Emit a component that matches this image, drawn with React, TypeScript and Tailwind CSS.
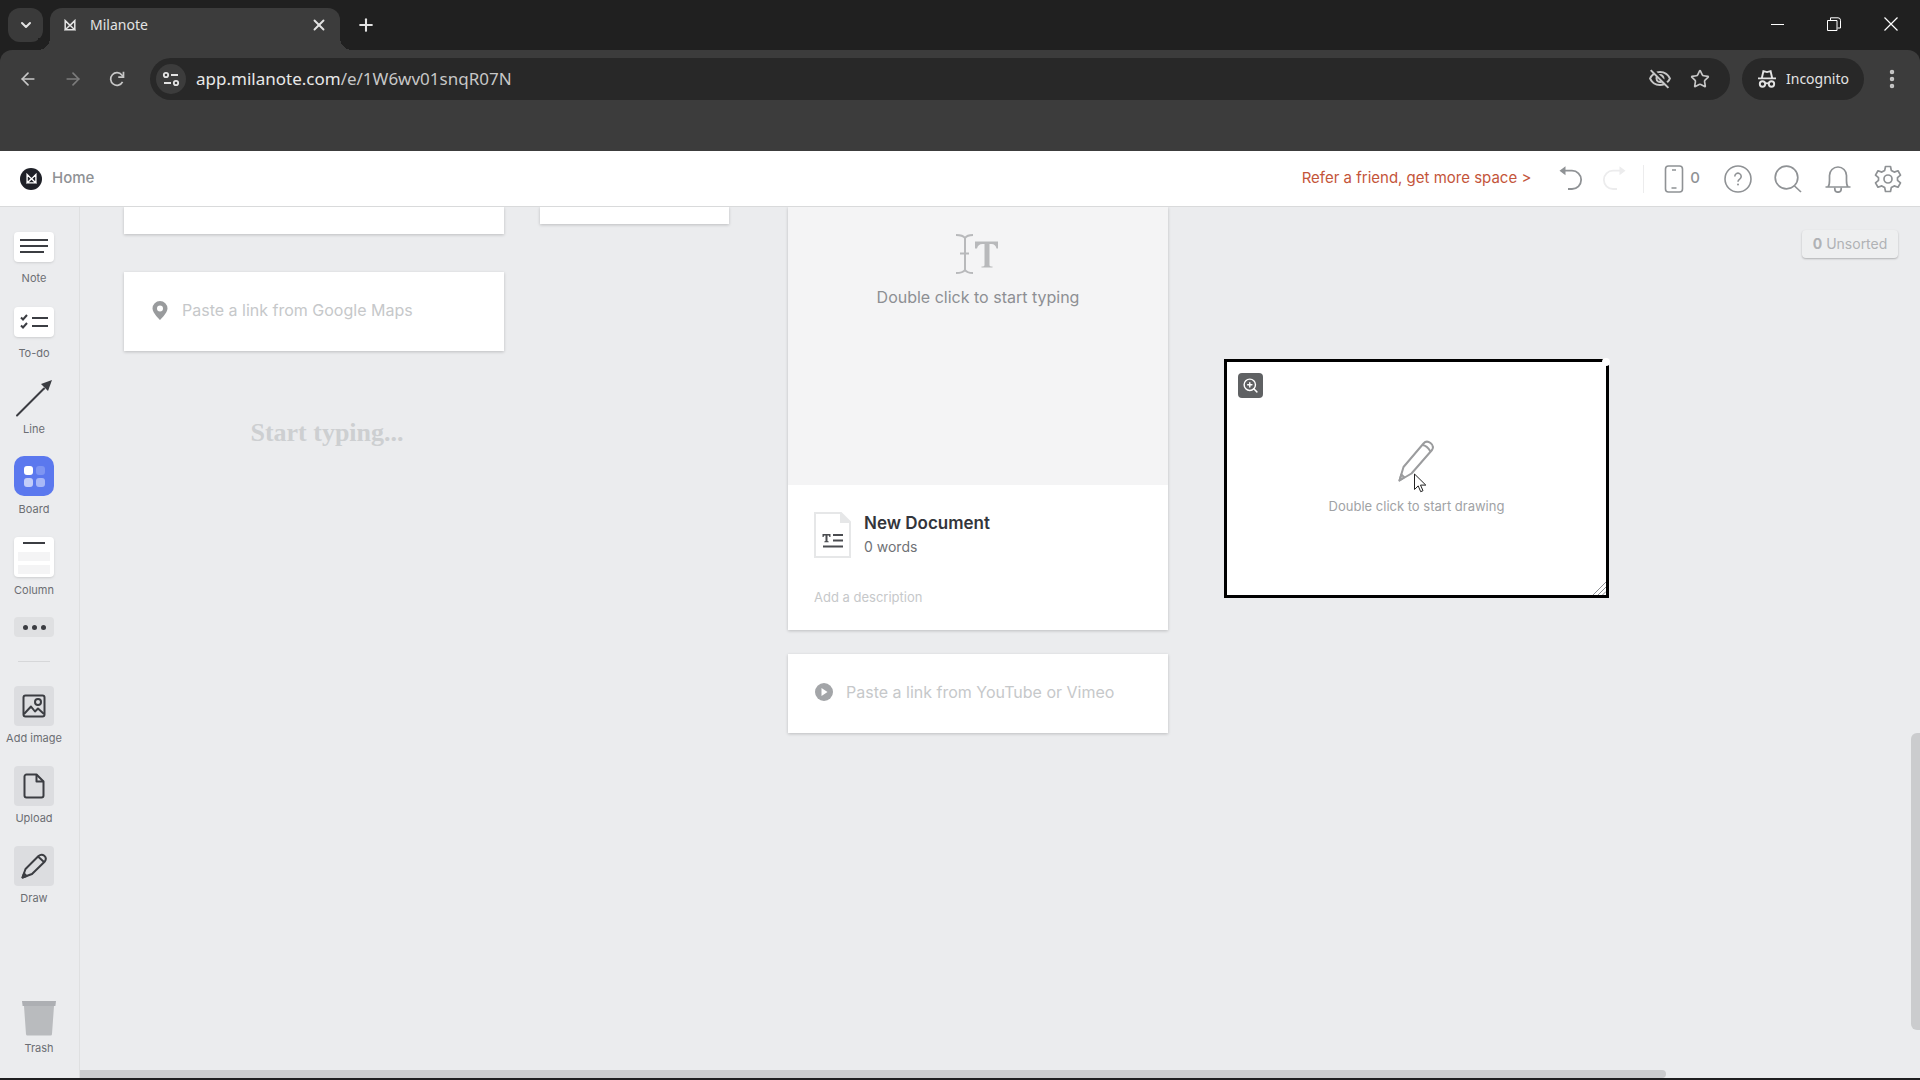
import React from 'react';
import {
  ArrowLeft,
  ArrowRight,
  ChevronDown,
  EllipsisVertical,
  Plus,
  Star,
  X,
  ZoomIn,
} from 'lucide-react';
import { MdOutlineVisibilityOff } from 'react-icons/md';

type IconProps = { className?: string };

function LogoMark({ className }: IconProps) {
  return (
    <svg viewBox="0 0 12 12" className={className} fill="none" stroke="currentColor" strokeWidth="1.5" strokeLinejoin="miter">
      <path d="M1.2 10.6V1.6L6 6.4l4.8-4.8v9M1.2 10.8L6 6.2l4.8 4.6z" />
    </svg>
  );
}

function TuneIcon({ className }: IconProps) {
  return (
    <svg viewBox="0 0 18 18" className={className} fill="none" stroke="currentColor" strokeWidth="1.8">
      <circle cx="4" cy="5" r="2.2" />
      <path d="M9 5h7M2 13h7" />
      <circle cx="14" cy="13" r="2.2" />
    </svg>
  );
}

function ReloadIcon({ className }: IconProps) {
  return (
    <svg viewBox="0 0 20 20" className={className} fill="none" stroke="currentColor" strokeWidth="1.9">
      <path d="M16.2 13.2A7 7 0 1 1 15.4 5.6L17 7.4" />
      <path d="M17.2 2v5.8h-5.8" />
    </svg>
  );
}

function IncognitoIcon({ className }: IconProps) {
  return (
    <svg viewBox="0 0 20 20" className={className} fill="none" stroke="currentColor" strokeWidth="1.9">
      <path d="M1 9.4h18M4.8 9.2L6.4 2.2l3.6.9 3.600-.9 1.600 7" />
      <circle cx="5.500" cy="15" r="2.700" />
      <circle cx="14.500" cy="15" r="2.700" />
      <path d="M8.200 14.600q1.800-1 3.600 0" />
    </svg>
  );
}

function UndoIcon({ className }: IconProps) {
  return (
    <svg viewBox="0 0 24 26" className={className} fill="none" stroke="currentColor" strokeWidth="1.8">
      <path d="M5 4.700h8a9 9 0 0 1 0 18.300H9" />
      <path d="M.5 4.700l6-4.500v9z" fill="currentColor" stroke="none" />
    </svg>
  );
}

function PhoneIcon({ className }: IconProps) {
  return (
    <svg viewBox="0 0 20 28" className={className} fill="none" stroke="currentColor" strokeWidth="1.6">
      <rect x="1.5" y="1" width="17" height="26" rx="3" />
      <path d="M8 5h4M7.5 23h5" />
    </svg>
  );
}

function HelpIcon({ className }: IconProps) {
  return (
    <svg viewBox="0 0 28 28" className={className} fill="none" stroke="currentColor" strokeWidth="1.6">
      <circle cx="14" cy="14" r="13" />
      <path d="M10.8 11.4a3.2 3.2 0 1 1 4.9 2.7c-1.200.8-1.700 1.300-1.700 2.700" />
      <circle cx="14" cy="19.400" r="1" fill="currentColor" stroke="none" />
    </svg>
  );
}

function SearchIcon({ className }: IconProps) {
  return (
    <svg viewBox="0 0 28 28" className={className} fill="none" stroke="currentColor" strokeWidth="1.7">
      <circle cx="12.500" cy="12.500" r="11.300" />
      <path d="M20 20.500l7 6.500" />
    </svg>
  );
}

function BellIcon({ className }: IconProps) {
  return (
    <svg viewBox="0 0 28 28" className={className} fill="none" stroke="currentColor" strokeWidth="1.700">
      <path d="M1.500 22h25M4 22c1.300-1.500 1.500-3.500 1.500-6.500V10.500a8.500 8.500 0 0 1 17 0v5c0 3 .2 5 1.500 6.500" strokeLinejoin="round" />
      <path d="M10.800 22.500v1.500a3.200 3.200 0 0 0 6.400 0v-1.500" />
    </svg>
  );
}

function GearIcon({ className }: IconProps) {
  return (
    <svg viewBox="0 0 28 28" className={className} fill="none" stroke="currentColor" strokeWidth="1.700" strokeLinejoin="round">
      <path d="M11.500 1.500h5l.8 3.900 2.900 1.700 3.800-1.300 2.500 4.300-3 2.600v2.600l3 2.600-2.500 4.300-3.800-1.300-2.900 1.700-.8 3.900h-5l-.8-3.900-2.900-1.700L4 22.200l-2.500-4.300 3-2.600v-2.600l-3-2.600L4 5.800l3.800 1.300 2.900-1.700z" />
      <circle cx="14" cy="14" r="4" />
    </svg>
  );
}

function PencilIcon({ className }: IconProps) {
  return (
    <svg viewBox="0 0 36 42" className={className} fill="none" stroke="currentColor" strokeWidth="2" strokeLinejoin="round">
      <path d="M1.500 40.500L5.500 27 25.500 3.500Q28.500 0 32.500 3t1.500 7L13.500 33.500z" />
      <path d="M24.500 5q4.500.500 8 6.500M1.500 40.500l1.800-6 3 2.700z" />
    </svg>
  );
}

function DrawToolIcon({ className }: IconProps) {
  return (
    <svg viewBox="0 0 26 26" className={className} fill="none" stroke="currentColor" strokeWidth="2" strokeLinejoin="round">
      <path d="M1.500 24.500L4.500 16 17.500 3Q20.500 0.500 23.300 2.800t.5 5.700L11 21z" />
      <path d="M17 3.500l6 5.500M1.500 24.500l1.500-4 2.500 2.500z" />
    </svg>
  );
}

function Tool({ label, children, gap }: { label: string; children: React.ReactNode; gap: string }) {
  return (
    <button className={`flex w-full flex-col items-center ${gap}`}>
      {children}
      <span className="text-[11px] leading-4 text-[#6b6e73]">{label}</span>
    </button>
  );
}

function Browser() {
  return (
    <div className="shrink-0 bg-[#202020] font-['Noto_Sans',sans-serif] text-[#e3e3e3]">
      <div className="flex h-[50px] items-start">
        <button aria-label="Search tabs" className="mt-2 ml-2 flex h-[34px] w-[35px] items-center justify-center rounded-xl bg-[#3a3a3a]">
          <ChevronDown className="size-4" strokeWidth={3} />
        </button>
        <div className="relative mt-2 ml-[7px] flex h-[42px] w-[290px] items-center rounded-t-xl bg-[#3c3c3c] pb-2 pl-[14px]">
          <span className="absolute bottom-0 -left-3 size-3 bg-[radial-gradient(circle_at_0_0,#202020_12px,#3c3c3c_12px)]" />
          <span className="absolute -right-3 bottom-0 size-3 bg-[radial-gradient(circle_at_100%_0,#202020_12px,#3c3c3c_12px)]" />
          <LogoMark className="size-3" />
          <span className="ml-[14px] text-sm">Milanote</span>
          <button aria-label="Close tab" className="mr-3 ml-auto">
            <X className="size-[18px]" strokeWidth={2.5} />
          </button>
        </div>
        <button aria-label="New tab" className="mt-[15px] ml-4">
          <Plus className="size-5" strokeWidth={2.500} />
        </button>
        <div className="mt-4 mr-5 ml-auto flex items-center gap-[39px] text-white">
          <button aria-label="Minimize" className="flex h-4 w-[18px] items-center justify-center">
            <span className="h-px w-[13px] bg-white" />
          </button>
          <button aria-label="Restore">
            <svg viewBox="0 0 14 14" className="w-[18px] px-[2px]" fill="none" stroke="currentColor">
              <path d="M.5 3.500h9.500v10H.5zM3.500 3V.800h7.500q2.500 0 2.500 2.500V11h-3" />
            </svg>
          </button>
          <button aria-label="Close window">
            <svg viewBox="0 0 14 14" className="w-[18px] px-[2px]" fill="none" stroke="currentColor" strokeWidth="1.200">
              <path d="M.5.5l13 13M13.500.5l-13 13" />
            </svg>
          </button>
        </div>
      </div>
      <div className="flex h-[101px] items-start rounded-t-xl bg-[#3c3c3c] pt-2 text-[#c7c7c7]">
        <div className="flex h-[42px] items-center gap-[25px] pr-[24px] pl-[18px]">
          <button aria-label="Back"><ArrowLeft className="size-5" /></button>
          <button aria-label="Forward" className="text-[#7c7c7c]"><ArrowRight className="size-5" /></button>
          <button aria-label="Reload"><ReloadIcon className="size-[18px]" /></button>
        </div>
        <div className="flex h-[42px] flex-1 items-center rounded-full bg-[#282828] pr-5 pl-[6px]">
          <button aria-label="Site information" className="flex size-[30px] items-center justify-center rounded-full bg-[#3c3c3c] text-[#e3e3e3]">
            <TuneIcon className="size-[18px]" />
          </button>
          <div className="relative ml-[10px] h-6 flex-1 text-[17px] leading-6">
            <span className="pointer-events-none absolute inset-0"><span className="text-[#e8e8e8]">app.milanote.com</span>/e/1W6wv01snqR07N</span>
            <input aria-label="Address" className="absolute inset-0 w-full bg-transparent outline-none" />
          </div>
          <button aria-label="Third-party cookies blocked"><MdOutlineVisibilityOff className="size-6" /></button>
          <button aria-label="Bookmark this tab" className="ml-[18px]"><Star className="size-5" /></button>
        </div>
        <button className="ml-3 flex h-[42px] w-[122px] items-center gap-[9px] rounded-full bg-[#282828] pl-[15px] text-sm text-[#e3e3e3]">
          <IncognitoIcon className="size-5" />
          Incognito
        </button>
        <button aria-label="Menu" className="mt-[9px] mr-4 ml-4">
          <EllipsisVertical className="size-6" strokeWidth={2.500} />
        </button>
      </div>
    </div>
  );
}

function Header() {
  return (
    <header className="flex h-14 shrink-0 items-center border-b border-[#d9dadb] bg-white text-[#8f9295]">
      <a href="#home" className="ml-5 flex items-center gap-[10px] text-[15px] font-medium">
        <span className="flex size-[22px] items-center justify-center rounded-full bg-[#1f2128] text-white">
          <LogoMark className="size-[11px]" />
        </span>
        Home
      </a>
      <a href="#refer" className="ml-auto text-[15px] text-[#c4553a]">Refer a friend, get more space &gt;</a>
      <button aria-label="Undo" className="ml-7"><UndoIcon className="w-6" /></button>
      <button aria-label="Redo" className="ml-[19px] -scale-x-100 text-[#ececed]"><UndoIcon className="w-6" /></button>
      <span className="ml-[17px] h-7 w-px bg-[#ececed]" />
      <button className="ml-5 flex items-center gap-[6px] text-[15px] font-medium"><PhoneIcon className="w-5" />0</button>
      <button aria-label="Help" className="ml-6"><HelpIcon className="size-7" /></button>
      <button aria-label="Search" className="ml-[22px]"><SearchIcon className="size-7" /></button>
      <button aria-label="Notifications" className="ml-[22px]"><BellIcon className="size-7" /></button>
      <button aria-label="Settings" className="mr-[18px] ml-[22px]"><GearIcon className="size-7" /></button>
    </header>
  );
}

function Sidebar() {
  return (
    <nav className="flex w-20 shrink-0 flex-col border-r border-[#dfe0e1] pt-[25px] pr-[11px] pb-[22px] text-[#3b3d42]">
      <div className="flex flex-col items-center">
        <Tool label="Note" gap="gap-2">
          <span className="flex h-[30px] w-10 flex-col gap-1 rounded-sm bg-white px-[6px] pt-[7px] shadow-sm">
            <span className="h-[2px] bg-current" />
            <span className="h-[2px] bg-current" />
            <span className="mr-1 h-[2px] bg-current" />
          </span>
        </Tool>
        <div className="h-[21px]" />
        <Tool label="To-do" gap="gap-2">
          <span className="flex h-[30px] w-10 items-center justify-center rounded-sm bg-white shadow-sm">
            <svg viewBox="0 0 28 16" className="w-7" fill="none" stroke="currentColor" strokeWidth="2">
              <path d="M1 3.500l2 2L7 1M1 11.500l2 2L7 9M12 4h16M12 12h16" />
            </svg>
          </span>
        </Tool>
        <div className="h-[18px]" />
        <Tool label="Line" gap="gap-1">
          <svg viewBox="0 0 38 38" className="size-[38px]" fill="none" stroke="currentColor" strokeWidth="2">
            <path d="M2 36.500L29 9.500" strokeLinecap="round" />
            <path d="M37 1l-4 11-7-7z" fill="currentColor" stroke="none" />
          </svg>
        </Tool>
        <div className="h-[19px]" />
        <Tool label="Board" gap="gap-[5px]">
          <span className="grid size-10 grid-cols-2 content-center justify-center gap-[3px] rounded-[10px] bg-[#5b78ee] pr-[9px] pl-[10px]">
            <span className="size-[9px] rounded-[3px] bg-white" />
            <span className="size-[9px] rounded-[3px] bg-[#7e95f2]" />
            <span className="size-[9px] rounded-[3px] bg-[#c3cdf9]" />
            <span className="size-[9px] rounded-[3px] bg-[#a9b8f7]" />
          </span>
        </Tool>
        <div className="h-5" />
        <Tool label="Column" gap="gap-[5px]">
          <span className="flex size-10 flex-col items-center gap-1 rounded-sm bg-white px-1 pt-[5px] shadow-sm">
            <span className="mb-1 h-[2px] w-[22px] bg-current" />
            <span className="h-[9px] w-full bg-[#f4f4f5]" />
            <span className="h-[9px] w-full bg-[#f4f4f5]" />
          </span>
        </Tool>
        <button aria-label="More tools" className="mt-[19px] flex h-5 w-10 items-center justify-center gap-1 rounded-sm bg-[#dfe0e2]">
          <span className="size-[5px] rounded-full bg-current" />
          <span className="size-[5px] rounded-full bg-current" />
          <span className="size-[5px] rounded-full bg-current" />
        </button>
        <div className="mt-6 mb-6 h-px w-8 bg-[#d6d7d9]" />
        <Tool label="Add image" gap="gap-1">
          <span className="flex size-10 items-center justify-center rounded-sm bg-[#dcdde0]">
            <svg viewBox="0 0 24 24" className="size-6" fill="none" stroke="currentColor" strokeWidth="2" strokeLinejoin="round">
              <rect x="1.500" y="1.500" width="21" height="21" rx="2" />
              <circle cx="16" cy="8" r="3" />
              <path d="M2 20l7-7.500 4 5 3-3 6 5.500" />
            </svg>
          </span>
        </Tool>
        <div className="h-5" />
        <Tool label="Upload" gap="gap-1">
          <span className="flex size-10 items-center justify-center rounded-sm bg-[#dcdde0]">
            <svg viewBox="0 0 22 26" className="h-[26px]" fill="none" stroke="currentColor" strokeWidth="2" strokeLinejoin="round">
              <path d="M13.500 1.500H3.500a2 2 0 0 0-2 2v19a2 2 0 0 0 2 2h15a2 2 0 0 0 2-2V8.500z" />
              <path d="M13.500 1.500v7h7" />
            </svg>
          </span>
        </Tool>
        <div className="h-5" />
        <Tool label="Draw" gap="gap-1">
          <span className="flex size-10 items-center justify-center rounded-sm bg-[#dcdde0]">
            <DrawToolIcon className="size-[26px]" />
          </span>
        </Tool>
      </div>
      <div className="mt-auto pl-[10px]">
        <Tool label="Trash" gap="gap-1">
          <svg viewBox="0 0 34 36" className="w-[34px]">
            <path d="M2 6h30l-2 28q0 1.500-1.500 1.500h-23Q4 35.500 4 34z" fill="#b9bbbe" />
            <path d="M0 1h34l-.6 5H.6z" fill="#adafb3" />
          </svg>
        </Tool>
      </div>
    </nav>
  );
}

const card = 'absolute bg-white shadow-[0_1px_3px_rgba(0,0,0,0.2)]';

function Canvas() {
  return (
    <main className="relative flex-1 overflow-hidden">
      <div className={`${card} top-0 left-11 h-[27px] w-[380px]`} />
      <div className={`${card} top-0 left-[460px] h-[17px] w-[189px]`} />
      <label className={`${card} top-[65px] left-11 flex h-[79px] w-[380px] items-center gap-[10px] pr-6 pb-1 pl-6`}>
        <svg viewBox="0 0 24 24" className="size-6 shrink-0" fill="#999b9d">
          <path fillRule="evenodd" d="M12 3a7.500 7.500 0 0 0-7.500 7.500C4.500 15 12 22 12 22s7.500-7 7.500-11.500A7.500 7.500 0 0 0 12 3zm0 4.500a3 3 0 1 1 0 6 3 3 0 0 1 0-6z" />
        </svg>
        <input aria-label="Google Maps link" placeholder="Paste a link from Google Maps" className="w-full text-base outline-none placeholder:text-[#c6c8ca]" />
      </label>
      <input
        aria-label="Title"
        placeholder="Start typing..."
        className="absolute top-[210px] left-11 w-[406px] text-center font-['Liberation_Serif',serif] text-[26px] leading-8 font-bold outline-none placeholder:text-[#cdcfd1]"
      />

      <article className={`${card} top-0 left-[708px] w-[380px]`}>
        <div className="flex h-[278px] flex-col items-center bg-[#f4f4f5] pt-[27px] text-[#b8b9bb]">
          <svg viewBox="0 0 44 40" className="mr-[2px] w-11" fill="none" stroke="currentColor" strokeWidth="2">
            <path d="M1 1q7 0 9 3 2-3 8-3M10 4v32M1 39q7 0 9-3 2 3 8 3M5 19.500h9" />
            <path d="M20 7.500h23v7h-1.500q-1-4.500-5-4.500h-2v21q0 1.500 3 1.500v1h-11v-1q3 0 3-1.500v-21h-2q-4.500 0-5.500 4.500H20z" fill="currentColor" stroke="none" />
          </svg>
          <p className="mt-[11px] text-base text-[#8d8f93]">Double click to start typing</p>
        </div>
        <div className="h-[145px] pt-[26px] pl-[26px]">
          <div className="flex items-start gap-[13px]">
            <svg viewBox="0 0 37 46" className="mt-px w-[37px]" fill="none" stroke="#e6e7e8" strokeWidth="2">
              <path d="M1 1h26l9 9v35H1z" />
              <path d="M27 1v9h9" fill="#e6e7e8" />
              <path d="M19 23h10M19 28.500h10M9 34.500h20" stroke="#4a4c50" />
              <path d="M8.500 22h8v3h-1l-.8-1.500h-1.200V29l1.200.5v.7h-4.400v-.7l1.200-.5v-5.500h-1.200L9.500 25h-1z" fill="#4a4c50" stroke="none" />
            </svg>
            <div>
              <h2 className="text-[17px] leading-6 font-semibold text-[#33353b]">New Document</h2>
              <p className="text-sm leading-6 text-[#6f7276]">0 words</p>
            </div>
          </div>
          <input aria-label="Description" placeholder="Add a description" className="mt-7 block text-[13px] leading-5 outline-none placeholder:text-[#c6c8ca]" />
        </div>
      </article>

      <label className={`${card} top-[447px] left-[708px] flex h-[79px] w-[380px] items-center gap-[13px] pr-6 pb-1 pl-[27px]`}>
        <svg viewBox="0 0 18 18" className="size-[18px] shrink-0">
          <circle cx="9" cy="9" r="9" fill="#a3a5a8" />
          <path d="M6.500 5l6 4-6 4z" fill="#fff" />
        </svg>
        <input aria-label="Video link" placeholder="Paste a link from YouTube or Vimeo" className="w-full text-base outline-none placeholder:text-[#c6c8ca]" />
      </label>

      <div className="absolute top-[152px] left-[1144px] flex h-[239px] w-[385px] flex-col items-center border-3 border-black bg-white pt-[78px]">
        <button aria-label="Zoom" className="absolute top-[11px] left-[11px] flex size-[25px] items-center justify-center rounded-sm bg-[#5f6163] text-white">
          <ZoomIn className="size-[17px]" />
        </button>
        <span className="absolute -top-1 -right-1 size-2 rounded-full bg-white" />
        <PencilIcon className="mr-[2px] w-9 text-[#9b9c9e]" />
        <p className="mt-[14px] text-[13px] leading-5 text-[#a0a2a5]">Double click to start drawing</p>
        <svg viewBox="0 0 14 14" className="absolute right-0 bottom-0 size-[14px]" stroke="#8d8f93">
          <path d="M1 14L14 1M6 14l8-8M10.500 14l3.500-3.500" />
        </svg>
        <svg viewBox="0 0 13 20" className="absolute top-[111px] left-[187px] w-[13px]" fill="#fff" stroke="#222">
          <path d="M.5 1v15.500l3.700-3.600 2.500 5.800 2.300-1-2.500-5.600h5.300z" />
        </svg>
      </div>

      <button className="absolute top-[23px] right-[22px] flex h-7 w-24 items-center justify-center gap-1 rounded-sm bg-[#eeeff0] text-sm text-[#b0b2b5] shadow-[0_1px_2px_rgba(0,0,0,0.25)]">
        <b className="font-bold">0</b>Unsorted
      </button>

      <div className="absolute right-0 bottom-[48px] h-[297px] w-[9px] rounded-l-md bg-[#cbccce]" />
      <div className="absolute right-[254px] bottom-0 left-0 h-2 rounded-r-md bg-[#cbccce]" />
    </main>
  );
}

export default function App() {
  return (
    <div className="flex h-screen flex-col overflow-hidden bg-[#ebecee] font-['Inter',sans-serif]">
      <Browser />
      <Header />
      <div className="flex min-h-0 flex-1 border-b-2 border-[#1f1f21]">
        <Sidebar />
        <Canvas />
      </div>
    </div>
  );
}
